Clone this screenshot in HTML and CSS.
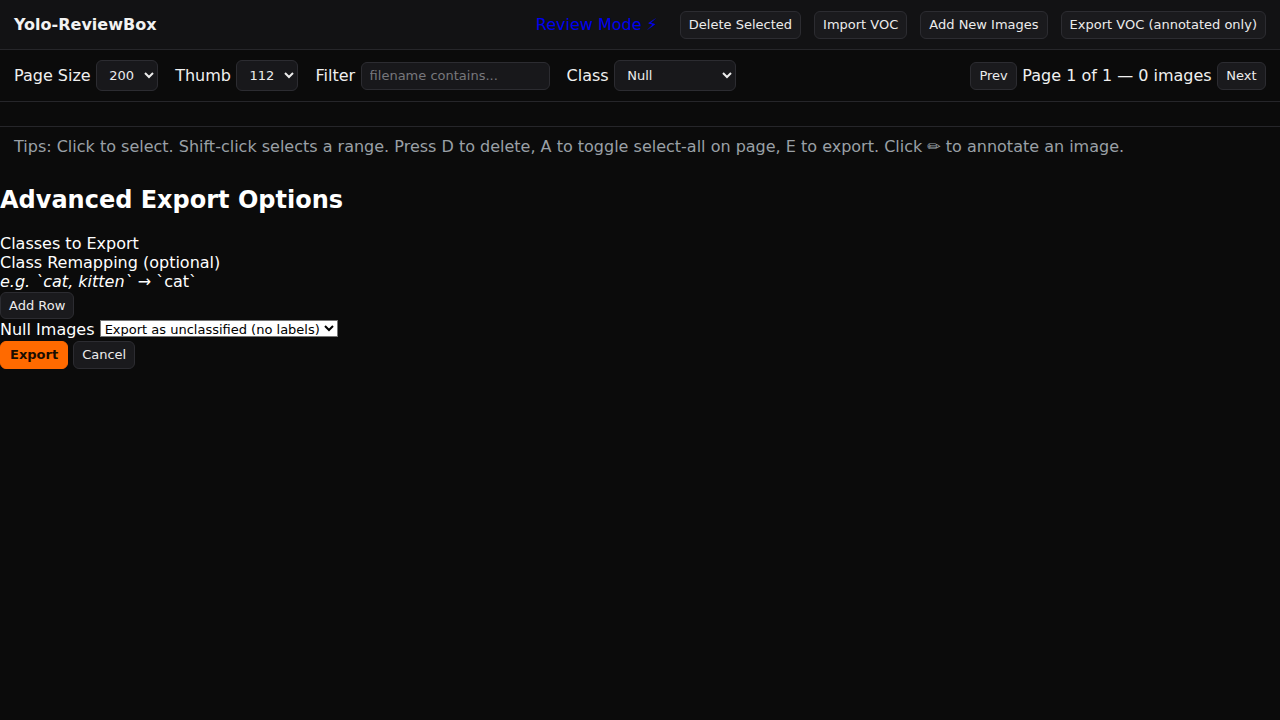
FILE: index.html
```html
<!DOCTYPE html>
<html>
<head>
<meta charset="utf-8">
<link rel="stylesheet" href="styles.css">
</head>
<body>
<header class="topbar">
  <div class="brand">Yolo-ReviewBox</div>
  <nav class="actions">
    <a class="mode-link" href="#">Review Mode ⚡</a>
    <button class="btn">Delete Selected</button>
    <button class="btn">Import VOC</button>
    <button class="btn">Add New Images</button>
    <button class="btn">Export VOC (annotated only)</button>
  </nav>
</header>
<div class="toolbar">
  <div class="controls">
    <label class="field">Page Size
      <select class="sel sel-sm"><option>200</option></select>
    </label>
    <label class="field">Thumb
      <select class="sel sel-sm"><option>112</option></select>
    </label>
    <label class="field">Filter
      <input class="inp" type="text" placeholder="filename contains...">
    </label>
    <label class="field">Class
      <select class="sel sel-lg"><option>Null</option></select>
    </label>
  </div>
  <div class="pager">
    <button class="btn btn-pg">Prev</button>
    <span class="pageinfo">Page 1 of 1 — 0 images</span>
    <button class="btn btn-pg">Next</button>
  </div>
</div>
<div class="strip"></div>
<div class="tips">Tips: Click to select. Shift-click selects a range. Press D to delete, A to toggle select-all on page, E to export. Click ✏ to annotate an image.</div>
<section class="export-panel">
  <h2 class="panel-title">Advanced Export Options</h2>
  <div class="line">Classes to Export</div>
  <div class="line">Class Remapping (optional)</div>
  <div class="line"><em>e.g. `cat, kitten`</em> → `cat`</div>
  <button class="btn btn-row">Add Row</button>
  <div class="line line-null">Null Images <select class="plain-sel"><option>Export as unclassified (no labels)</option></select></div>
  <div class="btn-line">
    <button class="btn btn-primary">Export</button>
    <button class="btn btn-cancel">Cancel</button>
  </div>
</section>
</body>
</html>
```
FILE: styles.css
```css
html, body {
  margin: 0;
  padding: 0;
  background: #0b0b0b;
  color: #ffffff;
  font-family: "DejaVu Sans", sans-serif;
  font-size: 16px;
}
.topbar {
  height: 50px;
  box-sizing: border-box;
  display: flex;
  align-items: center;
  justify-content: space-between;
  padding: 0 14px;
  background: #121214;
  border-bottom: 1px solid #26262a;
}
.brand {
  font-weight: bold;
  font-size: 16px;
  color: #f2f2f2;
}
.actions {
  display: flex;
  align-items: center;
  gap: 13px;
}
.mode-link {
  color: #0000ee;
  text-decoration: none;
  font-size: 16px;
  margin-right: 9px;
}
.btn {
  font-family: "DejaVu Sans", sans-serif;
  font-size: 13px;
  line-height: 16px;
  color: #ececec;
  background: #1a1a1d;
  border: 1px solid #2c2c31;
  border-radius: 6px;
  padding: 5px 8px;
  height: 28px;
  box-sizing: border-box;
  cursor: pointer;
}
.toolbar {
  height: 52px;
  box-sizing: border-box;
  display: flex;
  align-items: center;
  justify-content: space-between;
  padding: 0 14px;
  border-bottom: 1px solid #26262a;
}
.controls {
  display: flex;
  align-items: center;
  gap: 17px;
}
.field {
  display: flex;
  align-items: center;
  gap: 5.5px;
  font-size: 16px;
  color: #f0f0f0;
}
.sel {
  font-family: "DejaVu Sans", sans-serif;
  font-size: 13px;
  color: #ececec;
  background: #18181b;
  border: 1px solid #2c2c31;
  border-radius: 6px;
  height: 31px;
  padding: 0 6px 0 8px;
}
.sel-sm { width: 62px; }
.sel-lg { width: 122px; }
.inp {
  font-family: "DejaVu Sans", sans-serif;
  font-size: 13px;
  color: #ececec;
  background: #18181b;
  border: 1px solid #2c2c31;
  border-radius: 6px;
  height: 28px;
  width: 189px;
  box-sizing: border-box;
  padding: 0 8px;
}
.inp::placeholder { color: #77777c; }
.pager {
  display: flex;
  align-items: center;
  gap: 5px;
}
.pageinfo {
  font-size: 16px;
  color: #f0f0f0;
}
.btn-pg { padding: 5px 8.5px; }
.strip {
  height: 24px;
  border-bottom: 1px solid #26262a;
}
.tips {
  padding: 10px 14px 11px;
  color: #9aa0a6;
  font-size: 16px;
  line-height: 19px;
}
.export-panel {
  padding: 0;
}
.panel-title {
  font-size: 24px;
  font-weight: bold;
  margin: 19px 0 20px;
  line-height: 28px;
}
.line {
  line-height: 19px;
}
.line em { font-style: italic; }
.btn-row {
  display: block;
  margin: 1px 0 0;
  height: 27px;
}
.line-null {
  margin-top: 1px;
}
.plain-sel {
  font-family: "DejaVu Sans", sans-serif;
  font-size: 13px;
  background: #ffffff;
  color: #000000;
  border: 1px solid #767676;
  border-radius: 0;
  height: 17px;
  padding: 0;
  vertical-align: 1px;
}
.btn-line {
  display: flex;
  gap: 5px;
  margin-top: 2px;
}
.btn-primary {
  background: #ff6a00;
  border-color: #ff6a00;
  color: #1a0d00;
  font-weight: bold;
  height: 28px;
  padding: 5px 9px;
}
.btn-cancel { height: 28px; }
```
